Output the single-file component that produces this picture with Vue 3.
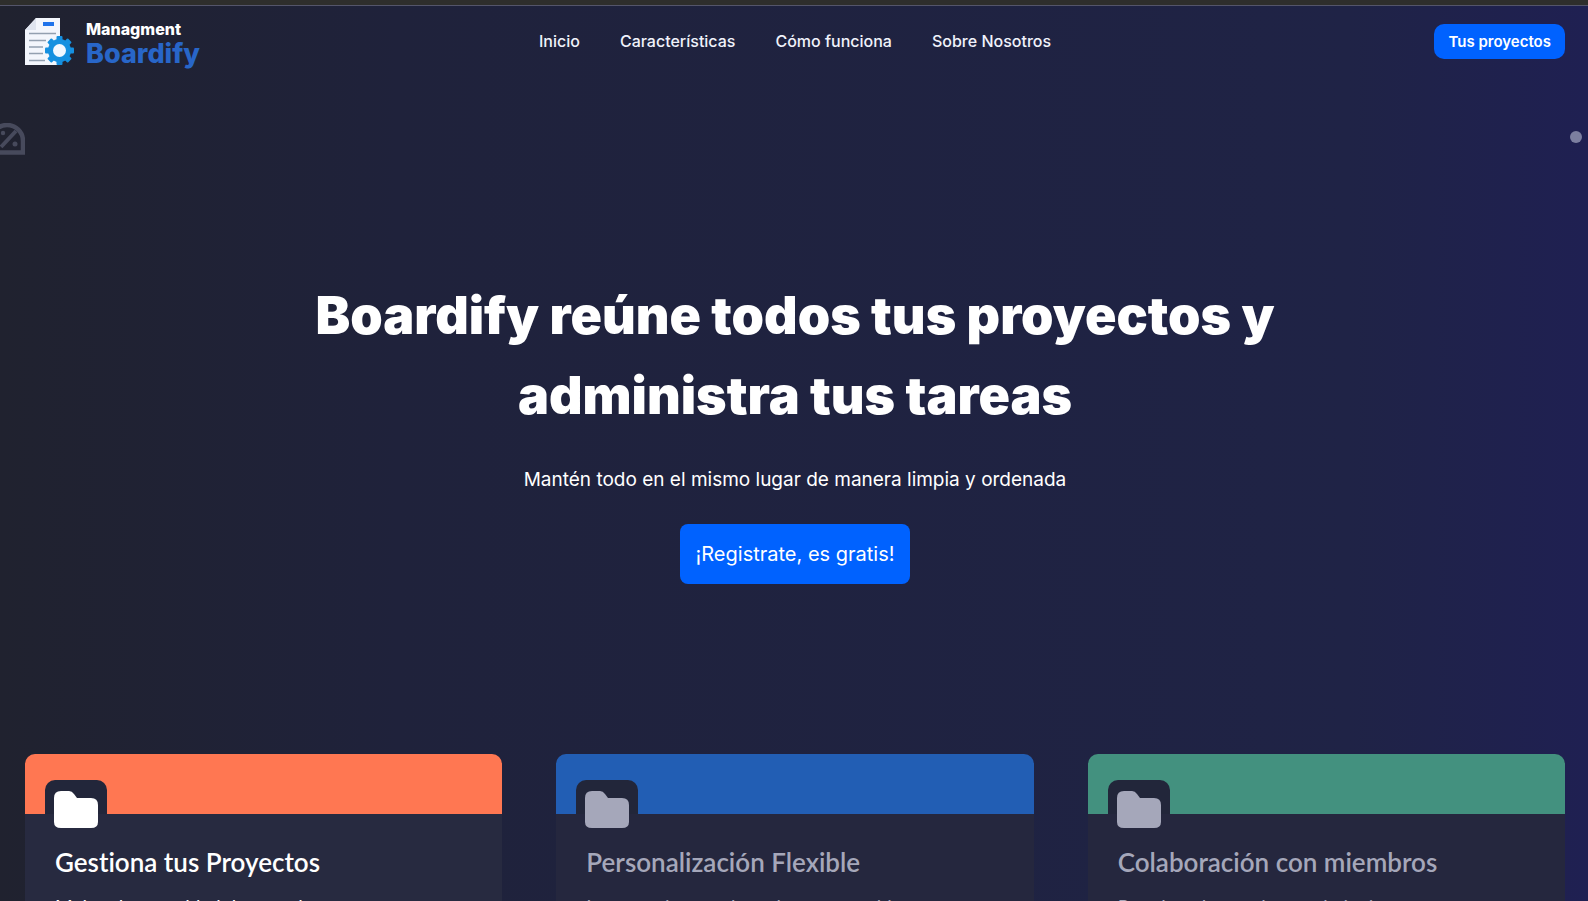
<script setup>
const links = ['Inicio', 'Características', 'Cómo funciona', 'Sobre Nosotros']

const cards = [
  { title: 'Gestiona tus Proyectos', text: 'Mejora la capacidad de organizar tus proyectos', tone: 'orange' },
  { title: 'Personalización Flexible', text: 'Los usuarios pueden adaptar sus tableros', tone: 'blue' },
  { title: 'Colaboración con miembros', text: 'Permite a los equipos trabajar juntos en proyectos', tone: 'green' },
]

const teeth = [0, 45, 90, 135, 180, 225, 270, 315]
</script>

<template>
  <div class="page">
    <header class="topbar">
      <a class="brand" href="#inicio">
        <svg class="logo" viewBox="0 0 50 48" aria-hidden="true">
          <path d="M11 1H35V48H0V13Z" fill="#f3f6fc" />
          <path d="M11 1V13H0Z" fill="#dfe4ef" />
          <rect x="18" y="5" width="11" height="4" fill="#1f73ea" />
          <path d="M4 16.500H31M4 23.500H21M4 30H18M4 36.500H18M4 43.500H20" stroke="#93a0b0" stroke-width="1.400" />
          <g fill="#1590e0">
            <circle cx="34.500" cy="33.500" r="11.500" />
            <rect v-for="a in teeth" :key="a" x="31.500" y="19" width="6" height="6" rx="1" :transform="`rotate(${a} 34.500 33.500)`" />
          </g>
          <circle cx="34.500" cy="33.500" r="6.500" fill="#f3f8ff" />
        </svg>
        <span class="names">
          <span class="small">Managment</span>
          <span class="big">Boardify</span>
        </span>
      </a>
      <nav class="nav">
        <a v-for="l in links" :key="l" href="#">{{ l }}</a>
      </nav>
      <div class="actions">
        <button class="projects" type="button">Tus proyectos</button>
      </div>
    </header>

    <svg class="gauge" viewBox="0 0 36 32" fill="none" stroke="#474a5c" aria-hidden="true">
      <path d="M2 29.500V18A16 16 0 0 1 34 18V29.500Z" stroke-width="4.500" />
      <path d="M12 24L27 8" stroke-width="4" />
      <circle cx="14" cy="10" r="2.200" fill="#474a5c" stroke="none" />
      <circle cx="26" cy="21" r="2.500" fill="#474a5c" stroke="none" />
    </svg>
    <span class="dot"></span>

    <main>
      <section class="hero">
        <h1>Boardify reúne todos tus proyectos y administra tus tareas</h1>
        <p>Mantén todo en el mismo lugar de manera limpia y ordenada</p>
        <button class="signup" type="button">¡Registrate, es gratis!</button>
      </section>

      <section class="cards">
        <article v-for="c in cards" :key="c.title" class="card" :class="c.tone">
          <div class="banner">
            <span class="badge">
              <svg viewBox="0 0 44 38" aria-hidden="true">
                <path d="M7 0H15Q18 0 20 3L23 7H37Q44 7 44 14V31Q44 37 37 37H7Q0 37 0 31V7Q0 0 7 0Z" fill="currentColor" />
              </svg>
            </span>
          </div>
          <div class="body">
            <h2>{{ c.title }}</h2>
            <p>{{ c.text }}</p>
          </div>
        </article>
      </section>
    </main>
  </div>
</template>

<style>
body {
  margin: 0;
  background: #20233a;
}
</style>

<style scoped>
.page {
  position: relative;
  height: 100vh;
  overflow: hidden;
  box-sizing: border-box;
  border-top: 5px solid #2e2e2c;
  background: linear-gradient(90deg, #20222f 0%, #1f223b 25%, #1f2346 85%, #1f2052 100%);
  color: #fff;
  font-family: Inter, "Liberation Sans", sans-serif;
}

.topbar {
  display: grid;
  grid-template-columns: 1fr auto 1fr;
  align-items: center;
  height: 70px;
  padding: 0 23px 0 25px;
  border-top: 1px solid #54556a;
}

.brand {
  display: flex;
  align-items: center;
  gap: 11px;
  text-decoration: none;
}

.logo {
  width: 50px;
  height: 48px;
}

.names {
  display: flex;
  flex-direction: column;
  padding-top: 6px;
}

.small {
  font-size: 16px;
  line-height: 20px;
  font-weight: 800;
  color: #fff;
}

.big {
  font-size: 27px;
  line-height: 30px;
  font-weight: 800;
  color: #2866c8;
}

.nav {
  display: flex;
  gap: 40px;
}

.nav a {
  color: #f0f2fb;
  font-size: 16px;
  line-height: 24px;
  font-weight: 500;
  text-decoration: none;
}

.actions {
  display: flex;
  justify-content: flex-end;
}

button {
  border: 0;
  background: #0062ff;
  color: #fff;
  font-family: inherit;
}

.projects {
  padding: 0 14px;
  border-radius: 10px;
  font-size: 15px;
  line-height: 35px;
  font-weight: 600;
}

.gauge {
  position: absolute;
  left: -11px;
  top: 118px;
  width: 36px;
  height: 32px;
}

.dot {
  position: absolute;
  right: 6px;
  top: 126px;
  width: 12px;
  height: 12px;
  border-radius: 50%;
  background: #7c7fa0;
}

.hero {
  display: flex;
  flex-direction: column;
  align-items: center;
  padding: 200px 23px 170px 25px;
  text-align: center;
}

.hero h1 {
  max-width: 1000px;
  margin: 0;
  font-size: 52px;
  line-height: 80px;
  font-weight: 900;
}

.hero p {
  margin: 29px 0;
  font-size: 19px;
  line-height: 30px;
}

.signup {
  padding: 0 16px;
  border-radius: 8px;
  font-size: 20px;
  line-height: 60px;
}

.cards {
  display: grid;
  grid-template-columns: repeat(3, 1fr);
  gap: 54px;
  padding: 0 23px 0 25px;
}

.card {
  border-radius: 10px;
  background: #272a40;
  color: #fff;
}

.banner {
  height: 60px;
  border-radius: 10px 10px 0 0;
  background: #ff7752;
}

.badge {
  position: relative;
  top: 26px;
  display: flex;
  justify-content: center;
  width: 62px;
  height: 54px;
  margin-left: 20px;
  padding-top: 11px;
  box-sizing: border-box;
  border-radius: 10px;
  background: linear-gradient(#22263a 34px, transparent 34px);
}

.badge svg {
  width: 44px;
  height: 38px;
}

.blue .banner {
  background: #225eb4;
}

.green .banner {
  background: #43917f;
}

.blue,
.green {
  background: #25273e;
  color: #a5a7ba;
}

.body {
  padding: 28px 30px;
  font-family: Lato, sans-serif;
  font-variant-ligatures: none;
}

.body h2 {
  margin: 0;
  font-size: 26px;
  line-height: 40px;
  font-weight: 600;
}

.body p {
  margin: 12px 0 0;
  font-size: 19px;
  line-height: 26px;
}
</style>
